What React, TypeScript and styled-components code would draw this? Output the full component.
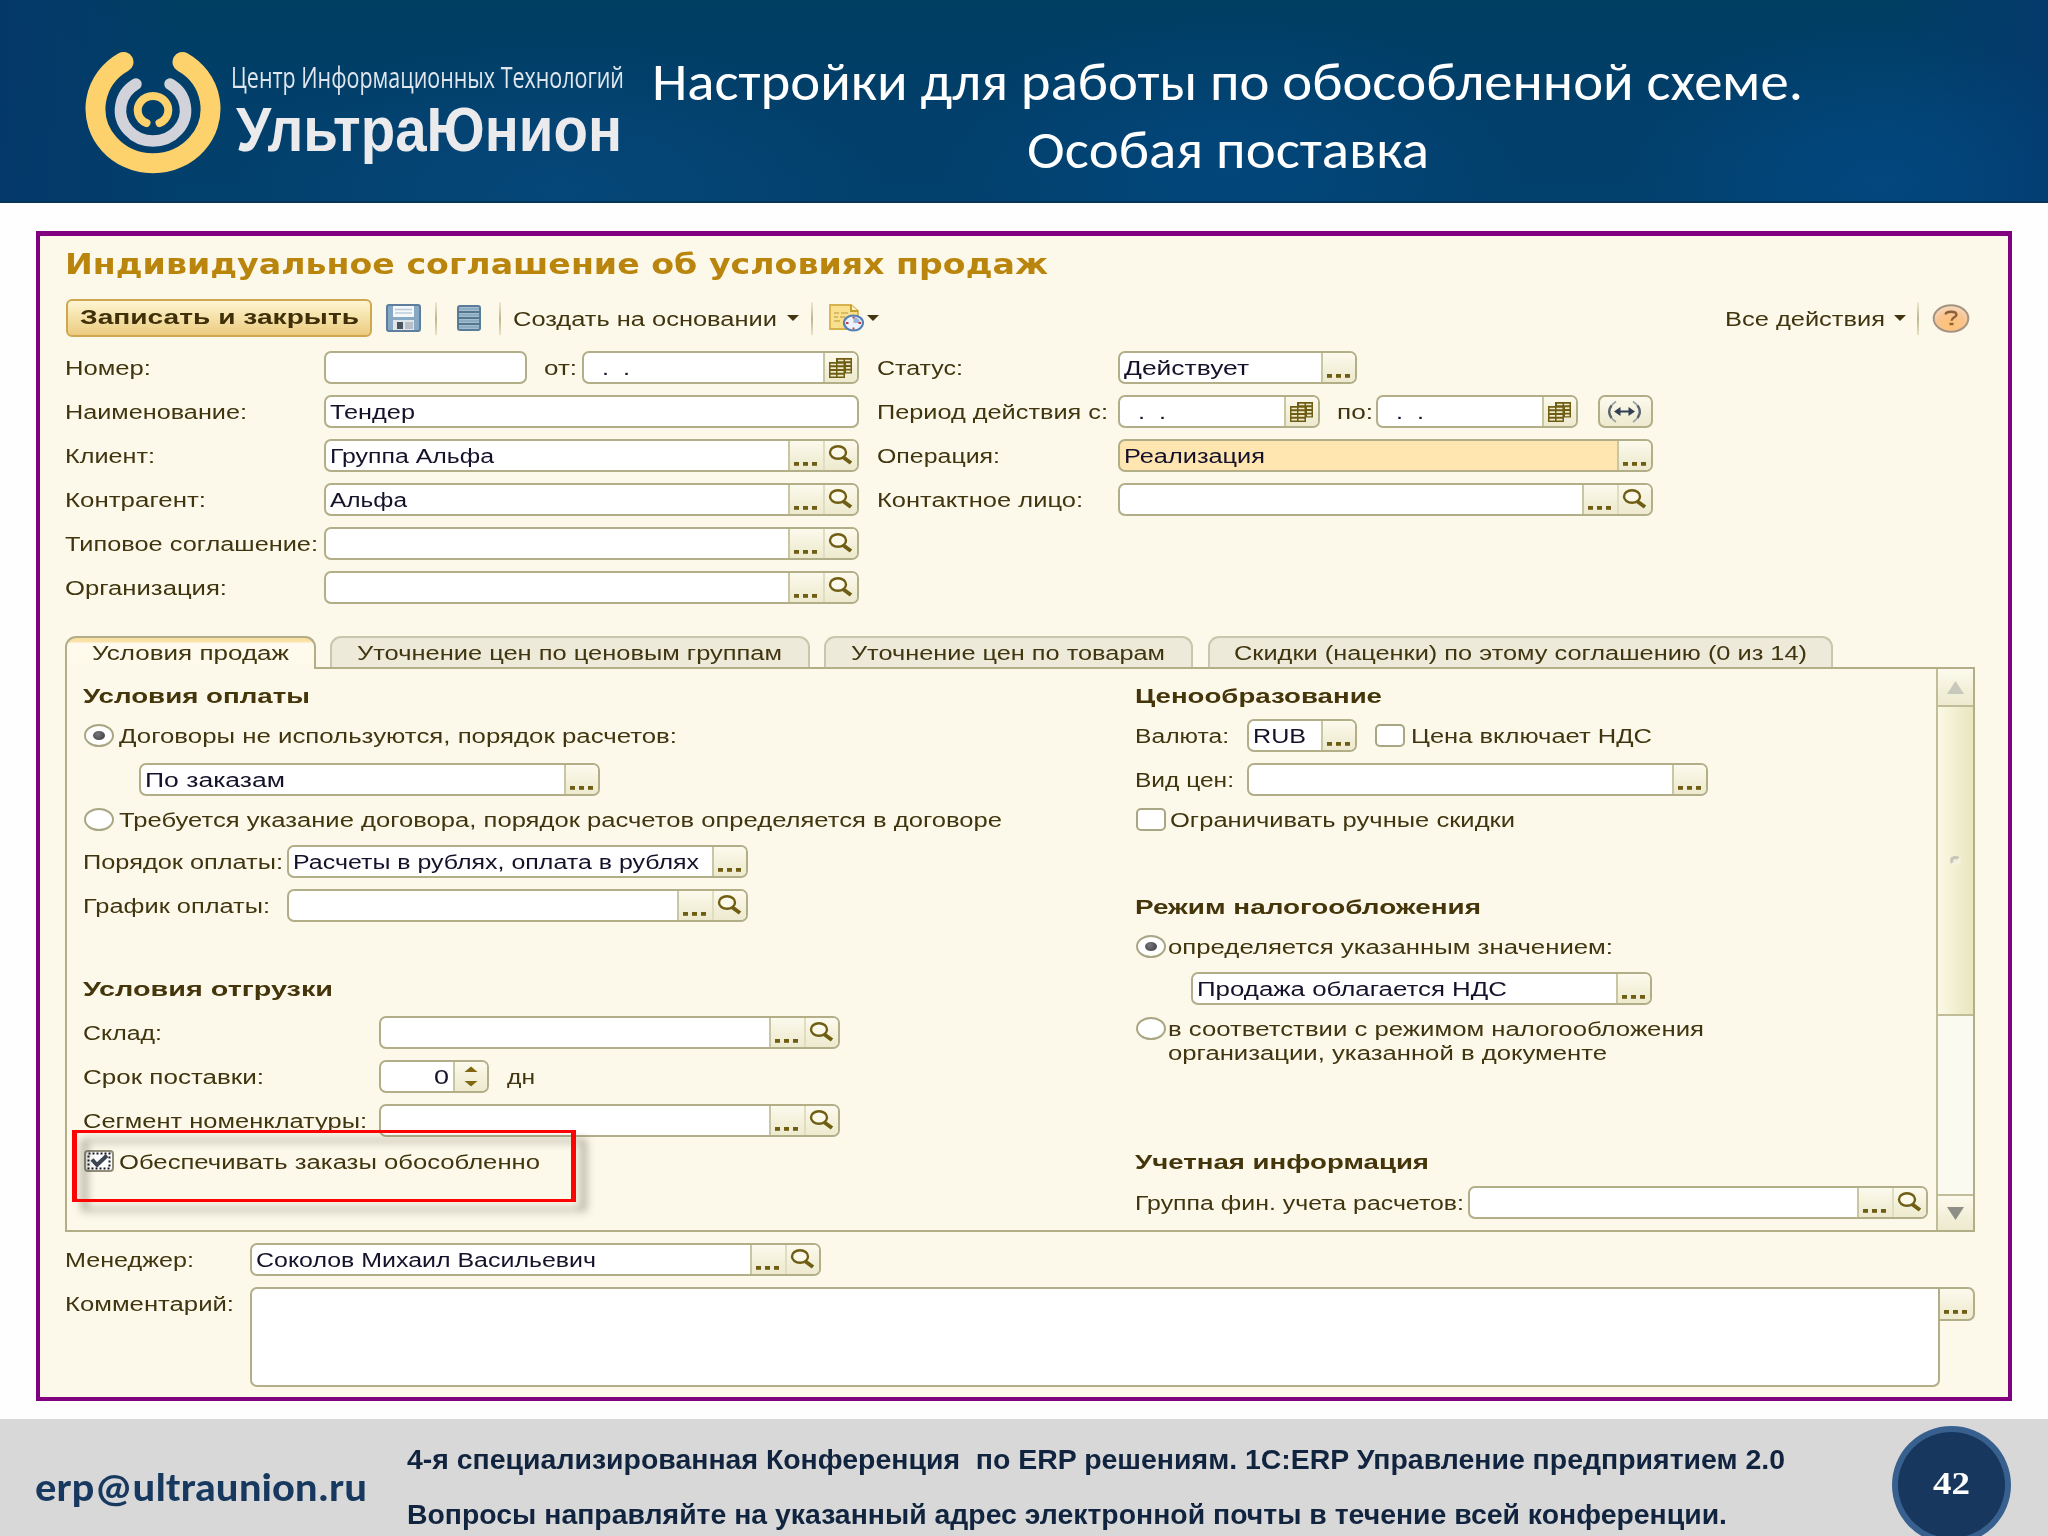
import React, { useLayoutEffect, useRef, useState } from "react";
import styled, { createGlobalStyle, css } from "styled-components";

const GlobalStyle = createGlobalStyle`
  * { box-sizing: border-box; }
  html, body { margin: 0; padding: 0; }
  body {
    width: 2048px;
    height: 1536px;
    overflow: hidden;
    background: #fefefe;
    font-family: "Liberation Sans", Arial, sans-serif;
  }
`;

const edge = "#b1ae88";

/* ---------- stretched text ---------- */

const FitBox = styled.span<{ $w: number }>`
  display: block;
  flex: none;
  width: ${(p) => p.$w}px;
  height: max-content;
  padding-top: 2px;
  text-align: left;
  white-space: pre;
`;

const FitInner = styled.span`
  display: inline-block;
  margin-left: -1px;
  transform-origin: 0 50%;
`;

function Fit({ w, children }: { w: number; children: string }) {
  const ref = useRef<HTMLSpanElement>(null);
  const [scale, setScale] = useState(1);
  useLayoutEffect(() => {
    const el = ref.current;
    if (!el) return;
    el.style.transform = "none";
    const natural = el.getBoundingClientRect().width;
    const next = (w + 2) / natural;
    el.style.transform = `scaleX(${next})`;
    setScale(next);
  }, [w, children]);
  return (
    <FitBox $w={w}>
      <FitInner ref={ref} style={{ transform: `scaleX(${scale})` }}>
        {children}
      </FitInner>
    </FitBox>
  );
}

/* ---------- slide ---------- */

const Slide = styled.div`
  width: 2048px;
  height: 1536px;
  display: flex;
  flex-direction: column;
  overflow: hidden;
  background: #fefefe;
`;

const Header = styled.header`
  height: 203px;
  flex: none;
  display: flex;
  padding-left: 85px;
  border-bottom: 2px solid #073459;
  background:
    radial-gradient(ellipse 330px 150px at 560px 190px, rgba(8, 76, 130, 0.6), transparent),
    radial-gradient(ellipse 300px 160px at 1230px 170px, rgba(2, 75, 132, 0.6), transparent),
    radial-gradient(ellipse 260px 160px at 1880px 180px, rgba(2, 75, 136, 0.65), transparent),
    linear-gradient(90deg, #04386a 0, rgba(4, 56, 106, 0) 180px, rgba(4, 56, 106, 0) 1900px, #043a6c 100%),
    linear-gradient(180deg, #003e62 0, #023f6b 60%, #02406d 100%);
`;

const LogoMark = styled.svg`
  width: 136px;
  height: 203px;
  flex: none;
`;

const LogoText = styled.div`
  width: 400px;
  margin-left: 11px;
  padding-top: 55px;
  flex: none;
`;

const LogoSmall = styled.div`
  height: 40px;
  line-height: 40px;
  font-family: "Open Sans", sans-serif;
  font-size: 29px;
  color: #dfe6ee;
`;

const LogoBig = styled.div`
  height: 64px;
  line-height: 64px;
  padding-left: 5px;
  font-size: 63px;
  font-weight: 700;
  color: #ebebee;
`;

const SlideTitle = styled.h1`
  margin: 0;
  margin-left: 22px;
  width: 1147px;
  padding-top: 46px;
  display: flex;
  flex-direction: column;
  align-items: center;
  font-family: Carlito, Lato, sans-serif;
  font-size: 53px;
  font-weight: 400;
  line-height: 68px;
  color: #fff;
  & > span { height: 68px; }
`;

const Frame = styled.main`
  height: 1170px;
  width: 1976px;
  margin: 28px 0 0 36px;
  flex: none;
  border: 4px solid #800080;
  border-top-width: 5px;
  padding-left: 26px;
  background: #fdf9ea;
  font-size: 20px;
  line-height: 23px;
  color: #40350f;
`;

const FormTitle = styled.h2`
  margin: 0;
  padding-top: 9px;
  height: 46px;
  line-height: 36px;
  font-family: "DejaVu Sans", Verdana, sans-serif;
  font-size: 28px;
  font-weight: 700;
  color: #ba850c;
`;

/* ---------- toolbar ---------- */

const Toolbar = styled.div`
  display: flex;
  align-items: center;
  height: 38px;
  width: 1909px;
  margin-top: 17px;
`;

const PrimaryButton = styled.button`
  width: 306px;
  height: 38px;
  padding: 0 0 3px 13px;
  flex: none;
  display: flex;
  align-items: center;
  border: 2px solid #cfa751;
  border-radius: 6px;
  background: linear-gradient(180deg, #fdf5d2 0, #f6e3ab 45%, #eccb80 100%);
  font: inherit;
  font-weight: 700;
  color: #40300a;
`;

const Separator = styled.i<{ $l: number; $r: number }>`
  width: 2px;
  height: 33px;
  flex: none;
  margin: 0 ${(p) => p.$r}px 0 ${(p) => p.$l}px;
  background: linear-gradient(180deg, #eeeacb, #bcb896 50%, #e6e2c0);
`;

const Caret = styled.i<{ $l: number }>`
  flex: none;
  margin-left: ${(p) => p.$l}px;
  border: 6px solid transparent;
  border-top: 6px solid #40350f;
  border-bottom: 0;
`;

const Icon = styled.svg<{ $l?: number }>`
  display: block;
  flex: none;
  margin-left: ${(p) => p.$l ?? 0}px;
`;

const Spacer = styled.div`
  flex: 1;
`;

const HelpSlot = styled.div`
  margin-right: 5px;
  flex: none;
`;

/* ---------- fields ---------- */

const Columns = styled.div<{ $mt?: number }>`
  display: flex;
  margin-top: ${(p) => p.$mt ?? 0}px;
`;

const Column = styled.div<{ $w: number }>`
  width: ${(p) => p.$w}px;
  flex: none;
`;

const Line = styled.div<{ $h?: number; $mt?: number; $pl?: number }>`
  display: flex;
  align-items: center;
  height: ${(p) => p.$h ?? 33}px;
  margin-top: ${(p) => p.$mt ?? 11}px;
  padding-left: ${(p) => p.$pl ?? 0}px;
`;

const LabelCell = styled.label<{ $w: number; $l?: number }>`
  width: ${(p) => p.$w}px;
  margin-left: ${(p) => p.$l ?? 0}px;
  flex: none;
`;

const FieldBox = styled.div<{ $w: number; $l?: number; $required?: boolean }>`
  width: ${(p) => p.$w}px;
  height: 33px;
  margin-left: ${(p) => p.$l ?? 0}px;
  flex: none;
  display: flex;
  border: 2px solid ${edge};
  border-radius: 7px;
  overflow: hidden;
  background: ${(p) => (p.$required ? "#ffe5b0" : "#fff")};
  color: #14122a;
`;

const FieldValue = styled.div<{ $end?: boolean }>`
  flex: 1;
  display: flex;
  align-items: center;
  justify-content: ${(p) => (p.$end ? "flex-end" : "flex-start")};
  padding: 0 5px;
`;

const buttonFace = css`
  background: linear-gradient(180deg, #fcfaed 0, #f4f1dc 50%, #edeacf 100%);
`;

const FieldButton = styled.span`
  width: 35px;
  flex: none;
  border-left: 2px solid #c9c6a2;
  ${buttonFace}
  & + & { border-left-color: #e0ddc0; }
  &:last-child { width: 34px; }
`;

const SwapButton = styled.button`
  width: 55px;
  height: 33px;
  margin-left: 20px;
  padding: 0;
  border: 2px solid ${edge};
  border-radius: 7px;
  ${buttonFace}
`;

const Radio = styled.i`
  width: 30px;
  height: 23px;
  flex: none;
  display: flex;
  align-items: center;
  justify-content: center;
  border: 2px solid #a9a684;
  border-radius: 50%;
  background: #fff;
`;

const RadioDot = styled.i`
  width: 12px;
  height: 9px;
  border-radius: 50%;
  background: radial-gradient(circle at 40% 35%, #77777c, #38383c);
`;

const Check = styled.i<{ $l?: number }>`
  width: 30px;
  height: 23px;
  margin-left: ${(p) => p.$l ?? 0}px;
  flex: none;
  border: 2px solid #a9a684;
  border-radius: 5px;
  background: #fff;
`;

const Choice = styled.span<{ $l?: number }>`
  display: block;
  margin-left: ${(p) => p.$l ?? 6}px;
`;

const Heading = styled.h3<{ $mt: number }>`
  margin: 0;
  margin-top: ${(p) => p.$mt}px;
  height: 24px;
  line-height: 24px;
  font-size: 20px;
  font-weight: 700;
  color: #44350a;
  & > span { padding-top: 1px; }
`;

/* ---------- tabs and panel ---------- */

const Tabs = styled.div`
  display: flex;
  height: 31px;
  margin: 32px 0 0 -1px;
`;

const Tab = styled.div<{ $w: number; $l: number; $pl: number; $active?: boolean }>`
  width: ${(p) => p.$w}px;
  height: ${(p) => (p.$active ? 33 : 31)}px;
  margin-left: ${(p) => p.$l}px;
  padding-left: ${(p) => p.$pl}px;
  padding-top: 4px;
  flex: none;
  border: 2px solid ${(p) => (p.$active ? edge : "#c9c6ae")};
  border-bottom: 0;
  border-radius: 11px 11px 0 0;
  position: relative;
  z-index: ${(p) => (p.$active ? 1 : 0)};
  background: ${(p) =>
    p.$active ? "linear-gradient(180deg, #fbdf9f 0, #fbe2aa 4px, #fefbee 5px, #fdf9ea 100%)" : "#edeada"};
  & > span { padding-top: 0; }
`;

const Panel = styled.section`
  width: 1910px;
  height: 565px;
  margin-left: -1px;
  display: flex;
  position: relative;
  border: 2px solid ${edge};
  padding-left: 17px;
  background: #fdf9ea;
`;

const ScrollBar = styled.div`
  width: 37px;
  margin-left: auto;
  display: flex;
  flex-direction: column;
  border-left: 2px solid #c0bd98;
  background: #fafaf0;
`;

const ScrollEnd = styled.div<{ $down?: boolean }>`
  height: 36px;
  display: flex;
  align-items: center;
  justify-content: center;
  ${buttonFace}
  ${(p) => p.$down && "border-top: 2px solid #c0bd98; margin-top: auto;"}
`;

const ScrollThumb = styled.div`
  height: 311px;
  display: flex;
  align-items: center;
  justify-content: center;
  border-top: 2px solid #c0bd98;
  border-bottom: 2px solid #c0bd98;
  background: linear-gradient(90deg, #fbf9e6, #f0edcd 60%, #e9e6c0);
`;

const Grip = styled.i`
  width: 11px;
  height: 9px;
  border-radius: 50%;
  border: 3px solid #c6c5b8;
  border-right-color: #f3f1e0;
  border-bottom-color: #f3f1e0;
`;

const Callout = styled.div`
  position: absolute;
  left: 5px;
  top: 461px;
  width: 504px;
  height: 72px;
  border: solid #fc0404;
  border-width: 3px 5px;
  filter: drop-shadow(10px 9px 4px rgba(60, 60, 50, 0.5));
`;

const CommentArea = styled.div`
  width: 1690px;
  height: 100px;
  margin-left: 17px;
  flex: none;
  border: 2px solid ${edge};
  border-radius: 7px 0 7px 7px;
  background: #fff;
`;

const CommentButton = styled.span`
  width: 35px;
  height: 34px;
  border: 2px solid ${edge};
  border-left: 0;
  border-radius: 0 7px 7px 0;
  ${buttonFace}
`;

const CommentRow = styled.div`
  display: flex;
  margin-top: 11px;
  & > label { padding-top: 4px; }
`;

/* ---------- footer ---------- */

const Footer = styled.footer`
  height: 117px;
  margin-top: 18px;
  flex: none;
  display: flex;
  background: #d9d8d9;
`;

const Email = styled.div`
  width: 408px;
  padding: 42px 0 0 36px;
  flex: none;
  font-family: Carlito, Lato, sans-serif;
  font-size: 41px;
  line-height: 48px;
  font-weight: 700;
  color: #17395f;
`;

const FooterText = styled.div`
  width: 1484px;
  padding-top: 11px;
  flex: none;
  font-size: 28px;
  line-height: 55px;
  font-weight: 700;
  color: #10243f;
  & > span { height: 55px; }
`;

const PageNumber = styled.div`
  width: 119px;
  height: 118px;
  margin-top: 7px;
  padding-bottom: 4px;
  flex: none;
  display: flex;
  align-items: center;
  justify-content: center;
  border: 6px solid #37608f;
  border-radius: 50%;
  background: #17375e;
  font-family: "Liberation Serif", serif;
  font-size: 31px;
  line-height: 36px;
  font-weight: 700;
  color: #fff;
`;

/* ---------- icons ---------- */

const olive = "#6f5d14";

const DotsIcon = () => (
  <Icon width="33" height="29" viewBox="0 0 33 29">
    {[4, 13, 22].map((x) => (
      <rect key={x} x={x} y="21" width="5" height="3.800" fill={olive} />
    ))}
  </Icon>
);

const FindIcon = () => (
  <Icon width="32" height="29" viewBox="0 0 32 29">
    <ellipse cx="13" cy="11.500" rx="8" ry="6.300" fill="#fbf9ea" stroke={olive} strokeWidth="2.400" />
    <path d="M18.500 16.500 L26 22" stroke={olive} strokeWidth="4" />
  </Icon>
);

const CalendarIcon = () => (
  <Icon width="32" height="29" viewBox="0 0 32 29">
    <rect x="11" y="5" width="16" height="15.500" fill={olive} />
    <rect x="4" y="9" width="16" height="16" fill={olive} />
    <path
      d="M13 7.500h5.500M20 7.500h5.500M21 11.200h4.500M21 14.900h4.500M21 18.400h4.500
         M5.500 11.500h5.500M12.500 11.500h6M5.500 15.200h5.500M12.500 15.200h6M5.500 18.900h5.500M12.500 18.900h6M5.500 22.600h5.500M12.500 22.600h6"
      stroke="#efebcd"
      strokeWidth="1.700"
    />
  </Icon>
);

const SpinIcon = () => (
  <Icon width="33" height="29" viewBox="0 0 33 29">
    <path d="M9.500 10 L16 4.500 L22.500 10Z M9.500 19 L22.500 19 L16 24.500Z" fill="#806812" />
  </Icon>
);

const icons = { dots: DotsIcon, find: FindIcon, cal: CalendarIcon, spin: SpinIcon };

interface FieldProps {
  w: number;
  l?: number;
  text?: string;
  tw?: number;
  end?: boolean;
  required?: boolean;
  buttons?: (keyof typeof icons)[];
}

function Field({ w, l, text, tw = 0, end, required, buttons = [] }: FieldProps) {
  return (
    <FieldBox $w={w} $l={l} $required={required}>
      <FieldValue $end={end}>{text && <Fit w={tw}>{text}</Fit>}</FieldValue>
      {buttons.map((name) => {
        const Glyph = icons[name];
        return (
          <FieldButton key={name}>
            <Glyph />
          </FieldButton>
        );
      })}
    </FieldBox>
  );
}

function Label({ cell, w, l, children }: { cell: number; w: number; l?: number; children: string }) {
  return (
    <LabelCell $w={cell} $l={l}>
      <Fit w={w}>{children}</Fit>
    </LabelCell>
  );
}

const Swirl = () => (
  <LogoMark viewBox="85 0 136 203" fill="none" strokeLinecap="round">
    <path d="M123.500 62 A57.500 54.500 0 1 0 182.500 62" stroke="#fdd26c" strokeWidth="20" />
    <path d="M136 84 A32.500 30.800 0 1 0 170 84" stroke="#d2d3da" strokeWidth="11.500" />
    <path d="M146.500 123 A15.300 14.200 0 1 1 159.500 123" stroke="#fdd26c" strokeWidth="8" />
  </LogoMark>
);

const SaveIcon = () => (
  <Icon $l={14} width="35" height="28" viewBox="0 0 35 28">
    <rect x="1" y="1" width="33" height="26" rx="2" fill="#88a9c4" stroke="#5d7f9d" strokeWidth="2" />
    <rect x="7" y="2" width="21" height="11" fill="#f4f8fb" />
    <path d="M9 5.500h17M9 9h17" stroke="#b9cbd9" strokeWidth="1.500" />
    <rect x="7" y="16" width="21" height="10" fill="#dfe5ea" />
    <rect x="11" y="18" width="6" height="7" fill="#4a5560" />
    <rect x="19" y="18" width="8" height="7" fill="#b8bfc8" />
  </Icon>
);

const ListIcon = () => (
  <Icon width="24" height="26" viewBox="0 0 24 26">
    <rect x="1" y="1" width="22" height="24" rx="2" fill="#a3bdd0" stroke="#5a7c98" strokeWidth="2" />
    <path d="M1 7h22M1 13h22M1 19h22" stroke="#55768f" strokeWidth="2" />
    <path d="M2 4h20M2 10h20M2 16h20M2 22h20" stroke="#86a5bc" strokeWidth="1.500" />
  </Icon>
);

const HistoryIcon = () => (
  <Icon width="37" height="28" viewBox="0 0 37 28">
    <path d="M2 1 H23 L30 7 V25 H2Z" fill="#f8e08d" stroke="#d6b24f" strokeWidth="1.800" />
    <path d="M23 1V7H30" fill="#fdf3c4" stroke="#c39a2e" strokeWidth="1.800" />
    <path d="M6 9h5M13 9h7M6 13h4M12 13h5M6 17h6" stroke="#cfae58" strokeWidth="1.600" />
    <ellipse cx="25.500" cy="19" rx="9.500" ry="7.500" fill="#edf3fb" stroke="#5580b8" strokeWidth="2.200" />
    <path d="M25.500 19 V13 A7 5.500 0 0 1 32 19Z" fill="#9fb5d8" />
    <path d="M25.500 12.500v2M25.500 23.500v2M18 19h2.500M30.500 19h2.500" stroke="#c23b3b" strokeWidth="1.800" />
  </Icon>
);

const HelpIcon = () => (
  <Icon width="38" height="29" viewBox="0 0 38 29">
    <defs>
      <radialGradient id="help" cx="50%" cy="75%" r="75%">
        <stop offset="0" stopColor="#ffc272" />
        <stop offset="0.600" stopColor="#f8c592" />
        <stop offset="1" stopColor="#f6dcc6" />
      </radialGradient>
    </defs>
    <ellipse cx="19" cy="14.500" rx="17.300" ry="13.200" fill="url(#help)" stroke="#a59482" strokeWidth="2" />
    <path
      d="M13.500 10.500 C14 6.800 24.500 6.800 24.500 10.800 C24.500 13.300 19.500 13.300 19.500 16.800"
      fill="none"
      stroke="#8a5f3a"
      strokeWidth="2.300"
    />
    <rect x="17.500" y="18.800" width="4" height="2.400" fill="#8a5f3a" />
  </Icon>
);

const SwapIcon = () => (
  <Icon width="51" height="29" viewBox="0 0 51 29">
    <path d="M16 4.500 Q2 14.500 16 25 M33 4.500 Q47 14.500 33 25" fill="none" stroke="#9aa0a4" strokeWidth="1.600" />
    <path d="M11.500 8.500 Q7 14.500 11.500 21 M37.500 8.500 Q42 14.500 37.500 21" fill="none" stroke="#5d6670" strokeWidth="2.400" />
    <path d="M14 14.500 L20.500 10 V13.500 H28.500 V10 L35 14.500 L28.500 19 V15.500 H20.500 V19Z" fill="#333f55" />
  </Icon>
);

const CheckedIcon = () => (
  <Icon width="30" height="22" viewBox="0 0 30 22">
    <rect x="1" y="1" width="28" height="20" rx="3" fill="#fff" stroke="#8f8d78" strokeWidth="2" />
    <rect x="4.500" y="3.500" width="21" height="15" fill="none" stroke="#16161f" strokeWidth="2" strokeDasharray="2 2" />
    <path d="M8 9.500 L13 15 L23 5.500" fill="none" stroke="#3d4552" strokeWidth="4" />
  </Icon>
);

const ScrollArrow = ({ down }: { down?: boolean }) => (
  <Icon width="17" height="13" viewBox="0 0 17 13">
    {down ? <path d="M0 0H17L8.500 13Z" fill="#8e8e86" /> : <path d="M0 13H17L8.500 0Z" fill="#c9c8bc" />}
  </Icon>
);

/* ---------- page ---------- */

function MainFields() {
  return (
    <Columns $mt={3}>
      <Column $w={812}>
        <Line>
          <Label cell={258} w={84}>Номер:</Label>
          <Field w={203} />
          <Label cell={37} w={31} l={18}>от:</Label>
          <Field w={277} text="  .  ." tw={40} buttons={["cal"]} />
        </Line>
        <Line>
          <Label cell={258} w={180}>Наименование:</Label>
          <Field w={535} text="Тендер" tw={83} />
        </Line>
        <Line>
          <Label cell={258} w={88}>Клиент:</Label>
          <Field w={535} text="Группа Альфа" tw={162} buttons={["dots", "find"]} />
        </Line>
        <Line>
          <Label cell={258} w={139}>Контрагент:</Label>
          <Field w={535} text="Альфа" tw={75} buttons={["dots", "find"]} />
        </Line>
        <Line>
          <Label cell={258} w={251}>Типовое соглашение:</Label>
          <Field w={535} buttons={["dots", "find"]} />
        </Line>
        <Line>
          <Label cell={258} w={160}>Организация:</Label>
          <Field w={535} buttons={["dots", "find"]} />
        </Line>
      </Column>
      <Column $w={790}>
        <Line>
          <Label cell={240} w={84}>Статус:</Label>
          <Field w={239} text="Действует" tw={123} buttons={["dots"]} />
        </Line>
        <Line>
          <Label cell={240} w={229}>Период действия с:</Label>
          <Field w={202} text="  .  ." tw={40} buttons={["cal"]} />
          <Label cell={38} w={34} l={18}>по:</Label>
          <Field w={202} text="  .  ." tw={40} buttons={["cal"]} />
          <SwapButton>
            <SwapIcon />
          </SwapButton>
        </Line>
        <Line>
          <Label cell={240} w={121}>Операция:</Label>
          <Field w={535} text="Реализация" tw={139} required buttons={["dots"]} />
        </Line>
        <Line>
          <Label cell={240} w={204}>Контактное лицо:</Label>
          <Field w={535} buttons={["dots", "find"]} />
        </Line>
      </Column>
    </Columns>
  );
}

function SalesTerms() {
  return (
    <Column $w={1052}>
      <Heading $mt={14}><Fit w={225}>Условия оплаты</Fit></Heading>
      <Line $h={23} $mt={17}>
        <Radio><RadioDot /></Radio>
        <Choice><Fit w={556}>Договоры не используются, порядок расчетов:</Fit></Choice>
      </Line>
      <Line $mt={16} $pl={55}>
        <Field w={461} text="По заказам" tw={138} buttons={["dots"]} />
      </Line>
      <Line $h={23} $mt={12}>
        <Radio />
        <Choice><Fit w={881}>Требуется указание договора, порядок расчетов определяется в договоре</Fit></Choice>
      </Line>
      <Line $mt={14}>
        <Label cell={203} w={198}>Порядок оплаты:</Label>
        <Field w={461} text="Расчеты в рублях, оплата в рублях" tw={404} buttons={["dots"]} />
      </Line>
      <Line>
        <Label cell={203} w={185}>График оплаты:</Label>
        <Field w={461} buttons={["dots", "find"]} />
      </Line>
      <Heading $mt={54}><Fit w={248}>Условия отгрузки</Fit></Heading>
      <Line $mt={16}>
        <Label cell={295} w={77}>Склад:</Label>
        <Field w={461} buttons={["dots", "find"]} />
      </Line>
      <Line>
        <Label cell={295} w={179}>Срок поставки:</Label>
        <Field w={110} text="0" tw={13} end buttons={["spin"]} />
        <Label cell={30} w={26} l={19}>дн</Label>
      </Line>
      <Line>
        <Label cell={295} w={282}>Сегмент номенклатуры:</Label>
        <Field w={461} buttons={["dots", "find"]} />
      </Line>
      <Line $h={22} $mt={13}>
        <CheckedIcon />
        <Choice><Fit w={419}>Обеспечивать заказы обособленно</Fit></Choice>
      </Line>
    </Column>
  );
}

function PricingTerms() {
  return (
    <Column $w={792}>
      <Heading $mt={14}><Fit w={245}>Ценообразование</Fit></Heading>
      <Line $mt={12}>
        <Label cell={111} w={92}>Валюта:</Label>
        <Field w={110} text="RUB" tw={51} buttons={["dots"]} />
        <Check $l={18} />
        <Choice $l={7}><Fit w={239}>Цена включает НДС</Fit></Choice>
      </Line>
      <Line>
        <Label cell={111} w={97}>Вид цен:</Label>
        <Field w={461} buttons={["dots"]} />
      </Line>
      <Line $h={23} $mt={12}>
        <Check />
        <Choice $l={5}><Fit w={343}>Ограничивать ручные скидки</Fit></Choice>
      </Line>
      <Heading $mt={63}><Fit w={344}>Режим налогообложения</Fit></Heading>
      <Line $h={23} $mt={17}>
        <Radio><RadioDot /></Radio>
        <Choice $l={3}><Fit w={443}>определяется указанным значением:</Fit></Choice>
      </Line>
      <Line $mt={14} $pl={55}>
        <Field w={461} text="Продажа облагается НДС" tw={308} buttons={["dots"]} />
      </Line>
      <Line $h={23} $mt={12}>
        <Radio />
        <Choice $l={3}><Fit w={534}>в соответствии с режимом налогообложения</Fit></Choice>
      </Line>
      <Line $h={24} $mt={0} $pl={33}>
        <Fit w={437}>организации, указанной в документе</Fit>
      </Line>
      <Heading $mt={85}><Fit w={292}>Учетная информация</Fit></Heading>
      <Line $mt={13}>
        <Label cell={332} w={327}>Группа фин. учета расчетов:</Label>
        <Field w={460} buttons={["dots", "find"]} />
      </Line>
    </Column>
  );
}

export default function App() {
  return (
    <>
      <GlobalStyle />
      <Slide>
        <Header>
          <Swirl />
          <LogoText>
            <LogoSmall><Fit w={391}>Центр Информационных Технологий</Fit></LogoSmall>
            <LogoBig><Fit w={384}>УльтраЮнион</Fit></LogoBig>
          </LogoText>
          <SlideTitle>
            <Fit w={1149}>Настройки для работы по обособленной схеме.</Fit>
            <Fit w={400}>Особая поставка</Fit>
          </SlideTitle>
        </Header>

        <Frame>
          <FormTitle><Fit w={981}>Индивидуальное соглашение об условиях продаж</Fit></FormTitle>
          <Toolbar>
            <PrimaryButton><Fit w={277}>Записать и закрыть</Fit></PrimaryButton>
            <SaveIcon />
            <Separator $l={14} $r={20} />
            <ListIcon />
            <Separator $l={18} $r={13} />
            <Fit w={262}>Создать на основании</Fit>
            <Caret $l={11} />
            <Separator $l={12} $r={15} />
            <HistoryIcon />
            <Caret $l={2} />
            <Spacer />
            <Fit w={158}>Все действия</Fit>
            <Caret $l={10} />
            <Separator $l={11} $r={13} />
            <HelpSlot><HelpIcon /></HelpSlot>
          </Toolbar>

          <MainFields />

          <Tabs>
            <Tab $w={251} $l={0} $pl={26} $active><Fit w={195}>Условия продаж</Fit></Tab>
            <Tab $w={480} $l={14} $pl={26}><Fit w={423}>Уточнение цен по ценовым группам</Fit></Tab>
            <Tab $w={369} $l={14} $pl={26}><Fit w={312}>Уточнение цен по товарам</Fit></Tab>
            <Tab $w={625} $l={15} $pl={25}><Fit w={571}>Скидки (наценки) по этому соглашению (0 из 14)</Fit></Tab>
          </Tabs>
          <Panel>
            <SalesTerms />
            <PricingTerms />
            <ScrollBar>
              <ScrollEnd><ScrollArrow /></ScrollEnd>
              <ScrollThumb><Grip /></ScrollThumb>
              <ScrollEnd $down><ScrollArrow down /></ScrollEnd>
            </ScrollBar>
            <Callout />
          </Panel>

          <Line>
            <Label cell={184} w={127}>Менеджер:</Label>
            <Field w={571} text="Соколов Михаил Васильевич" tw={338} buttons={["dots", "find"]} />
          </Line>
          <CommentRow>
            <Label cell={167} w={167}>Комментарий:</Label>
            <CommentArea />
            <CommentButton><DotsIcon /></CommentButton>
          </CommentRow>
        </Frame>

        <Footer>
          <Email><Fit w={330}>erp@ultraunion.ru</Fit></Email>
          <FooterText>
            <Fit w={1376}>4-я специализированная Конференция  по ERP решениям. 1С:ERP Управление предприятием 2.0</Fit>
            <Fit w={1318}>Вопросы направляйте на указанный адрес электронной почты в течение всей конференции.</Fit>
          </FooterText>
          <PageNumber><Fit w={35}>42</Fit></PageNumber>
        </Footer>
      </Slide>
    </>
  );
}
